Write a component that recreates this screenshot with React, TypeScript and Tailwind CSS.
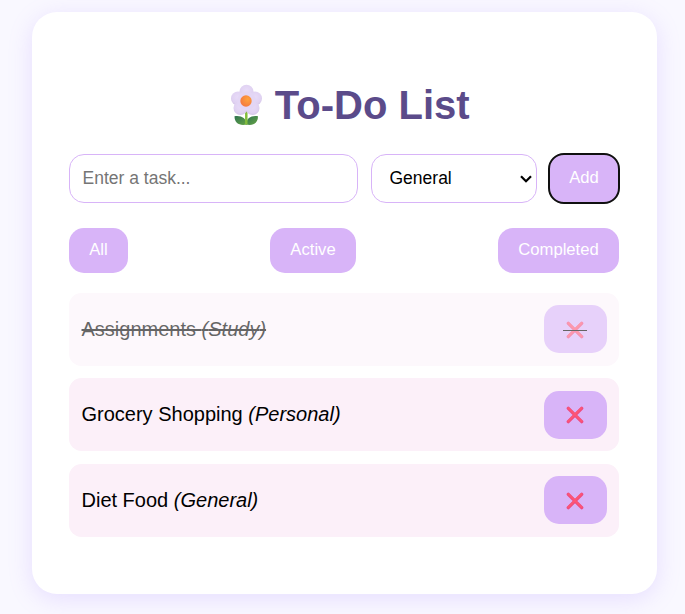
import React from "react";

const tasks = [
  { name: "Assignments", category: "Study", done: true },
  { name: "Grocery Shopping", category: "Personal", done: false },
  { name: "Diet Food", category: "General", done: false },
];

function Flower() {
  return (
    <svg width="33" height="42" viewBox="0 0 33 42" className="shrink-0">
      <defs>
        <radialGradient id="petal" cx="50%" cy="40%" r="62%">
          <stop offset="0" stopColor="#e8dbf8" />
          <stop offset="0.7" stopColor="#e0d2f2" />
          <stop offset="1" stopColor="#d3c4e6" />
        </radialGradient>
        <radialGradient id="core" cx="65%" cy="35%" r="70%">
          <stop offset="0" stopColor="#ffa23c" />
          <stop offset="1" stopColor="#f4793f" />
        </radialGradient>
        <linearGradient id="leaf" x1="0" y1="0" x2="1" y2="1">
          <stop offset="0" stopColor="#2f7350" />
          <stop offset="1" stopColor="#67a545" />
        </linearGradient>
      </defs>
      <path d="M4.500 32.300c6.500-1 11.500 1.500 12.500 8.200C9.500 42 4.500 39.500 4.500 32.300Z" fill="url(#leaf)" />
      <path d="M28 32.300c-6.500-1-11.500 1.500-12 8.200C23 42 28 39.500 28 32.300Z" fill="url(#leaf)" />
      <path d="M16.300 27v13.500" stroke="#83bd3d" strokeWidth="2.500" />
      <g fill="url(#petal)">
        <circle cx="16.500" cy="7.800" r="7" />
        <circle cx="8" cy="14.500" r="7" />
        <circle cx="25" cy="14.500" r="7" />
        <circle cx="10.500" cy="24" r="7" />
        <circle cx="22.500" cy="24" r="7" />
      </g>
      <circle cx="16.500" cy="17" r="9.500" fill="#e3d6f5" />
      <circle cx="16" cy="17" r="5.700" fill="url(#core)" />
    </svg>
  );
}

function Cross() {
  return (
    <svg className="mt-[0.600px]" width="18" height="18" viewBox="0 0 18 18">
      <path d="M2.300 2.300l13.400 13.400M15.700 2.300l-13.400 13.400" stroke="#ee4a80" strokeWidth="3.300" strokeLinecap="round" />
      <path d="M2.500 2.100l13 13M15.300 2.100L2.300 15.100" stroke="#fd5674" strokeWidth="2" strokeLinecap="round" />
    </svg>
  );
}

const button = "rounded-[15px] bg-[#d8b4f8] text-[16.667px] leading-[19px] text-white";

export default function App() {
  return (
    <div className="h-[614px] overflow-hidden bg-[#f9f8ff] pl-8 pt-3 font-['Liberation_Sans',Arial,sans-serif] text-black">
      <main className="h-[582px] w-[625px] rounded-[25px] bg-white px-[37px] pt-[69px] shadow-[0_5px_25px_rgba(160,120,255,0.2)]">
        <h1 className="flex h-12 items-center justify-center gap-[11.500px] pl-[11px] text-[40px] font-bold leading-[46px] text-[#5b4b8a]">
          <Flower />
          <span>To-Do List</span>
        </h1>
        <form className="mt-[25px] flex h-[49px]" onSubmit={(e) => e.preventDefault()}>
          <input
            className="w-[289px] rounded-[15px] border border-[#d8b4f8] bg-white px-[12.500px] text-[17.500px] placeholder:text-[#757575] outline-none"
            placeholder="Enter a task..."
          />
          <div className="relative ml-[13px] w-[166px]">
            <select className="h-full w-full appearance-none rounded-[15px] border border-[#d8b4f8] bg-white pl-[17.500px] text-[17.500px] outline-none">
              <option>General</option>
              <option>Study</option>
              <option>Personal</option>
            </select>
            <svg className="pointer-events-none absolute right-[5px] top-[20px]" width="12" height="10" viewBox="0 0 12 10">
              <path d="M1 2.300l5 5 5-5" fill="none" stroke="#000" strokeWidth="2.200" />
            </svg>
          </div>
          <button className={`${button} ml-3 w-[70px] pb-0.5 outline-2 -outline-offset-1 outline-[#101010]`}>Add</button>
        </form>
        <div className="mt-[25px] flex h-[45px] w-[550px] justify-between">
          <button className={`${button} w-[59px] pb-0.5`}>All</button>
          <button className={`${button} w-[86px] pb-0.5`}>Active</button>
          <button className={`${button} w-[121px] pb-0.5`}>Completed</button>
        </div>
        <ul className="mt-[19.900px] flex w-[550px] flex-col gap-[12.500px]">
          {tasks.map((task) => (
            <li
              key={task.name}
              className={`flex h-[73px] items-center justify-between rounded-[12.500px] px-[12.500px] text-[20px] leading-[23px] ${task.done ? "bg-[#fdf4fb] opacity-60" : "bg-[#fcf0f9]"}`}
            >
              <span className={task.done ? "line-through" : ""}>
                {task.name} <em>({task.category})</em>
              </span>
              <button aria-label="Delete" className={`${button} relative flex h-12 w-[63px] items-center justify-center`}>
                <Cross />
                {task.done && <span className="absolute left-[19px] top-[24.500px] h-px w-6 bg-black" />}
              </button>
            </li>
          ))}
        </ul>
      </main>
    </div>
  );
}
